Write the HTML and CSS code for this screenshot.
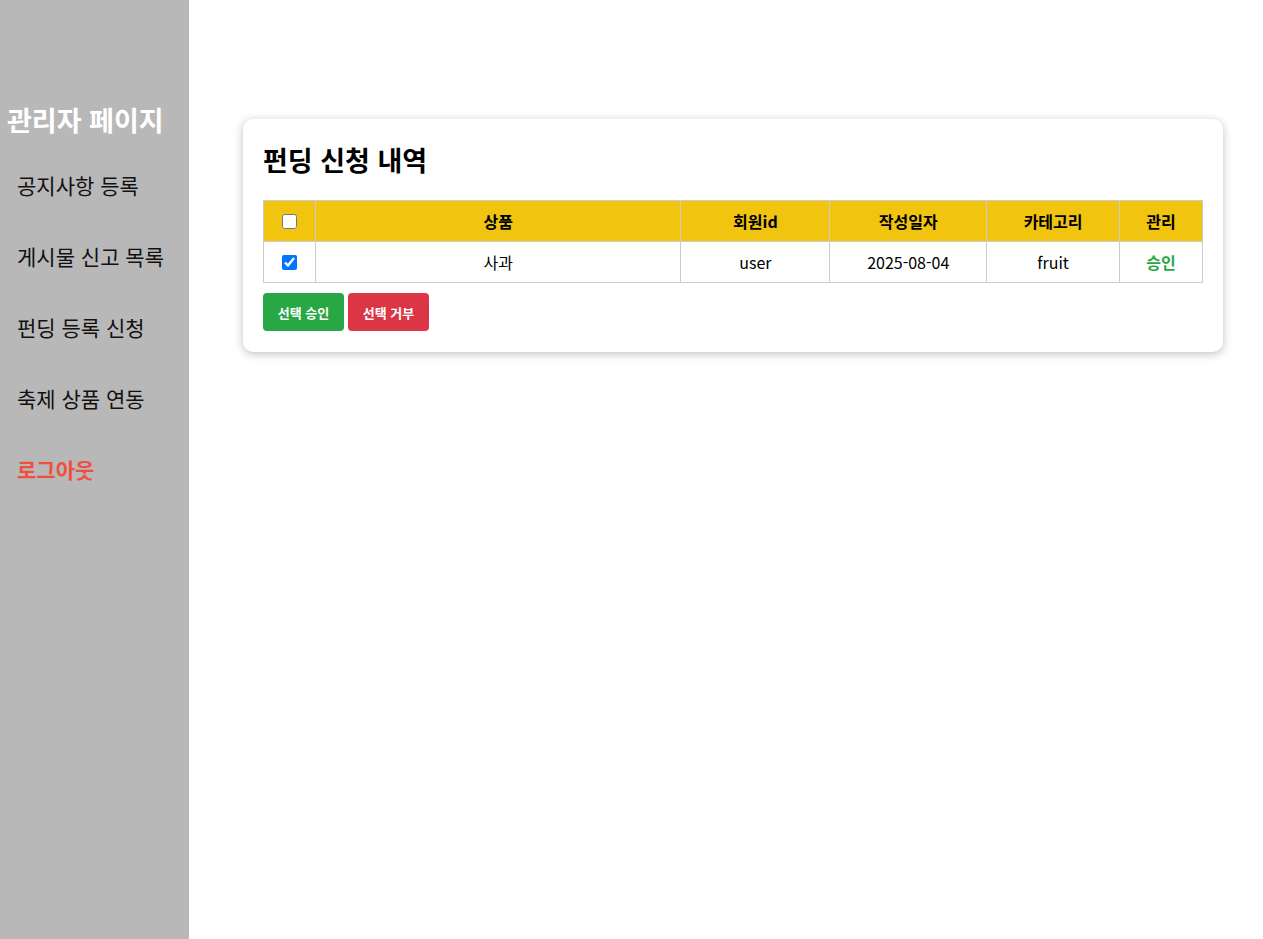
FILE: index.html
```html
<!DOCTYPE html>
<html lang="ko">
<head>
<meta charset="utf-8">
<title>관리자 페이지</title>
<link rel="stylesheet" href="styles.css">
</head>
<body>
<div class="layout">
  <aside class="sidebar">
    <h2 class="brand">관리자 페이지</h2>
    <nav class="menu">
      <a class="menu-item">공지사항 등록</a>
      <a class="menu-item">게시물 신고 목록</a>
      <a class="menu-item">펀딩 등록 신청</a>
      <a class="menu-item">축제 상품 연동</a>
      <a class="menu-item logout">로그아웃</a>
    </nav>
  </aside>
  <main class="main">
    <section class="card">
      <h1 class="card-title">펀딩 신청 내역</h1>
      <table class="table">
        <colgroup>
          <col class="c-check"><col class="c-product"><col class="c-user"><col class="c-date"><col class="c-cat"><col class="c-manage">
        </colgroup>
        <thead>
          <tr>
            <th><input type="checkbox"></th>
            <th>상품</th>
            <th>회원id</th>
            <th>작성일자</th>
            <th>카테고리</th>
            <th>관리</th>
          </tr>
        </thead>
        <tbody>
          <tr>
            <td><input type="checkbox" checked></td>
            <td>사과</td>
            <td>user</td>
            <td>2025-08-04</td>
            <td>fruit</td>
            <td class="approve">승인</td>
          </tr>
        </tbody>
      </table>
      <div class="actions">
        <button class="btn btn-approve">선택 승인</button>
        <button class="btn btn-reject">선택 거부</button>
      </div>
    </section>
  </main>
</div>
</body>
</html>
```
FILE: styles.css
```css
* { box-sizing: border-box; }
html, body { margin: 0; padding: 0; }
body {
  font-family: "Noto Sans CJK KR", "Noto Sans", sans-serif;
  color: #000;
  background: #fff;
}
.layout {
  display: flex;
  min-height: 939px;
}
.sidebar {
  width: 189px;
  flex: none;
  background: #b8b8b8;
  padding: 100px 0 0 0;
}
.brand {
  margin: 0;
  padding-left: 7px;
  color: #fff;
  font-size: 27px;
  font-weight: 700;
  line-height: 40px;
}
.menu {
  display: flex;
  flex-direction: column;
  padding-top: 30px;
}
.menu-item {
  display: block;
  padding-left: 17px;
  font-size: 21px;
  line-height: 30px;
  height: 71px;
  color: #111;
  text-decoration: none;
}
.menu-item.logout {
  color: #f04e3e;
  font-weight: 700;
}
.main {
  flex: 1;
  padding: 119px 40px 0 54px;
}
.card {
  background: #fff;
  border-radius: 10px;
  box-shadow: 0 2px 10px rgba(0,0,0,0.25);
  padding: 20px 20px 21px 20px;
}
.card-title {
  margin: 0 0 19px 0;
  font-size: 27px;
  font-weight: 700;
  line-height: 42px;
}
.table {
  width: 940px;
  border-collapse: collapse;
  font-size: 16px;
  text-align: center;
}
.c-check { width: 52px; }
.c-product { width: 366px; }
.c-user { width: 149px; }
.c-date { width: 157px; }
.c-cat { width: 133px; }
.c-manage { width: 83px; }
.table th, .table td {
  border: 1px solid #ccc;
  height: 41px;
  padding: 0 8px;
  vertical-align: middle;
}
.table th {
  background: #f1c40f;
  font-weight: 700;
}
.table input[type="checkbox"] {
  display: block;
  width: 15px;
  height: 15px;
  margin: 0 auto;
}
.approve {
  color: #28a745;
  font-weight: 700;
}
.actions {
  display: flex;
  gap: 4px;
  margin-top: 10px;
}
.btn {
  width: 81px;
  height: 38px;
  border: none;
  border-radius: 4px;
  color: #fff;
  font-family: inherit;
  font-size: 13px;
  font-weight: 700;
}
.btn-approve { background: #28a745; }
.btn-reject { background: #dc3545; }
```
